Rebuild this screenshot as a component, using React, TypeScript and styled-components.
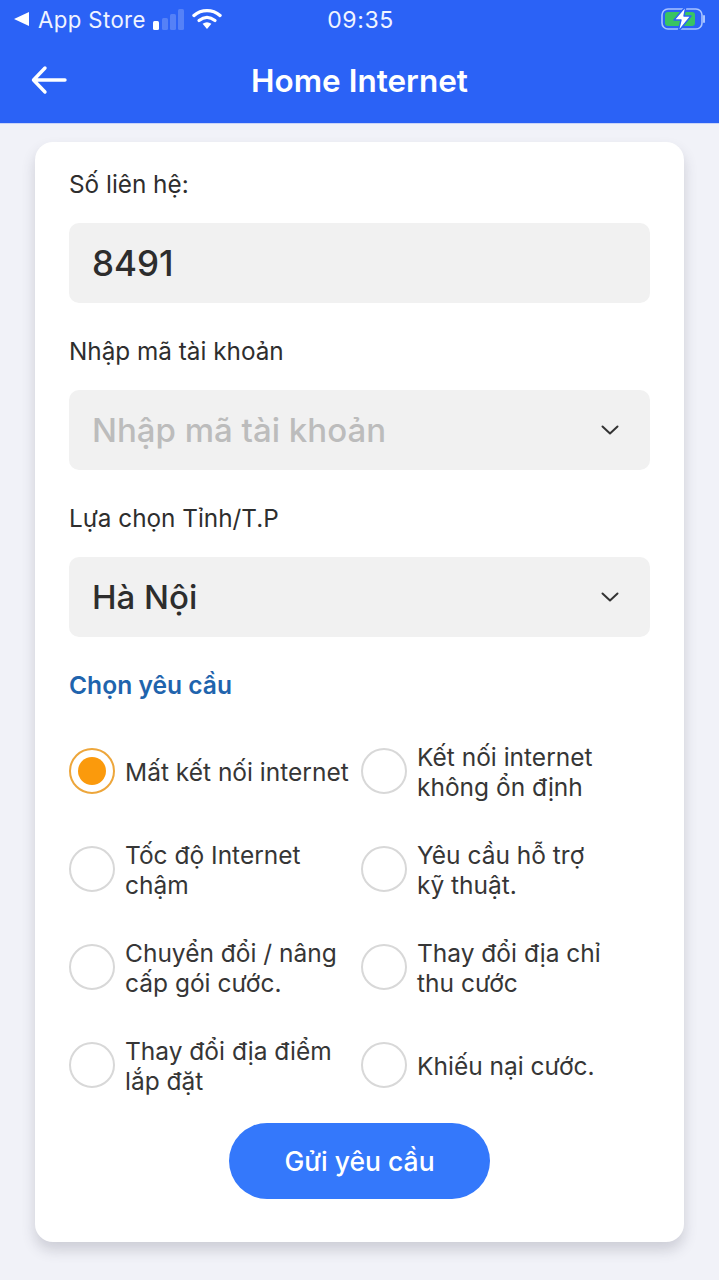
import React from "react";
import styled, { createGlobalStyle } from "styled-components";

const Global = createGlobalStyle`
  html, body { margin: 0; padding: 0; background: #f1f2f8; }
  body { font-family: Inter, "Noto Sans", sans-serif; }
`;

const Page = styled.div`
  width: 719px;
  height: 1280px;
  overflow: hidden;
  background: #f1f2f8;
  display: flex;
  flex-direction: column;
`;

const Header = styled.header`
  height: 124px;
  background: #2b62f6;
  color: #fff;
  display: flex;
  flex-direction: column;
  flex-shrink: 0;
  border-bottom: 1px solid #c9d4f8;
  box-sizing: border-box;
`;

const StatusBar = styled.div`
  height: 38px;
  padding: 0 12px 0 14px;
  display: grid;
  grid-template-columns: 1fr auto 1fr;
  align-items: center;
  font-size: 22.2px;
  color: #f0f4ff;
`;

const StatusLeft = styled.div`
  display: flex;
  align-items: center;
`;

const StatusRight = styled.div`
  display: flex;
  justify-content: flex-end;
`;

const StoreLabel = styled.span`
  margin-left: 9px;
  margin-right: 7px;
  letter-spacing: 0.4px;
`;

const Clock = styled.span`
  font-size: 23px;
  letter-spacing: 0.6px;
  padding-top: 2px;
`;

const NavBar = styled.div`
  position: relative;
  height: 85px;
  display: flex;
  align-items: center;
  justify-content: center;
`;

const BackIcon = styled.svg`
  position: absolute;
  left: 31px;
  top: 27px;
`;

const Title = styled.h1`
  margin: 1px 0 0;
  font-size: 31.5px;
  line-height: 36px;
  font-weight: 600;
`;

const Card = styled.main`
  margin: 18px 35px 0;
  height: 1100px;
  box-sizing: border-box;
  padding: 27px 34px 0;
  background: #fff;
  border-radius: 18px;
  box-shadow: 0 8px 14px rgba(60, 60, 80, 0.2);
  display: flex;
  flex-direction: column;
`;

const FieldLabel = styled.label`
  font-size: 24.3px;
  line-height: 30px;
  color: #2e2e2e;
  margin-bottom: 24px;
`;

const Field = styled.div`
  height: 80px;
  border-radius: 10px;
  background: #f1f1f1;
  display: flex;
  align-items: center;
  justify-content: space-between;
  padding: 0 31px 0 23px;
  margin-bottom: 33px;
  box-sizing: border-box;
`;

const FieldText = styled.span<{ $muted?: boolean; $large?: boolean }>`
  font-size: ${(p) => (p.$large ? "35px" : "33px")};
  font-weight: 450;
  color: ${(p) => (p.$muted ? "#bcbcbc" : "#2d2d2d")};
`;

const SectionTitle = styled.h2`
  margin: 0;
  font-size: 24.6px;
  line-height: 30px;
  font-weight: 600;
  color: #1f64ad;
`;

const Options = styled.div`
  margin-top: 41px;
  display: grid;
  grid-template-columns: 292px 1fr;
  grid-auto-rows: 98px;
`;

const Option = styled.div`
  display: flex;
  align-items: center;
  gap: 10px;
  height: 60px;
`;

const Radio = styled.span<{ $checked?: boolean }>`
  width: 46px;
  height: 46px;
  flex-shrink: 0;
  box-sizing: border-box;
  border-radius: 50%;
  border: ${(p) => (p.$checked ? "2.5px solid #eda63b" : "2px solid #d8d8d8")};
  display: flex;
  align-items: center;
  justify-content: center;
`;

const RadioDot = styled.span`
  width: 28px;
  height: 28px;
  border-radius: 50%;
  background: #fb9a0c;
`;

const OptionText = styled.span`
  font-size: 24.5px;
  line-height: 30px;
  padding-top: 2px;
  color: #363636;
  white-space: pre-line;
`;

const Submit = styled.button`
  align-self: center;
  width: 261px;
  height: 76px;
  margin-top: -10px;
  border: none;
  border-radius: 38px;
  background: #3478fb;
  color: #fff;
  font-family: Inter, "Noto Sans", sans-serif;
  font-size: 26.5px;
  font-weight: 500;
`;

const options = [
  { text: "Mất kết nối internet", checked: true },
  { text: "Kết nối internet\nkhông ổn định" },
  { text: "Tốc độ Internet\nchậm" },
  { text: "Yêu cầu hỗ trợ\nkỹ thuật." },
  { text: "Chuyển đổi / nâng\ncấp gói cước." },
  { text: "Thay đổi địa chỉ\nthu cước" },
  { text: "Thay đổi địa điểm\nlắp đặt" },
  { text: "Khiếu nại cước." },
];

const Chevron = () => (
  <svg width="18" height="12" viewBox="0 0 18 12" fill="none">
    <path d="M1.5 2.5 L9 9.5 L16.5 2.5" stroke="#333" strokeWidth="2" strokeLinecap="round" strokeLinejoin="round" />
  </svg>
);

export default function App() {
  return (
    <Page>
      <Global />
      <Header>
        <StatusBar>
          <StatusLeft>
            <svg width="15" height="14" viewBox="0 0 15 14">
              <path d="M15 0 V14 L0 7 Z" fill="#fff" />
            </svg>
            <StoreLabel>App Store</StoreLabel>
            <svg width="32" height="21" viewBox="0 0 32 21">
              <rect x="0" y="12" width="6" height="9" rx="1.5" fill="#fff" />
              <rect x="9" y="9" width="6" height="12" rx="1.5" fill="#fff" fillOpacity=".2" />
              <rect x="17" y="5" width="6" height="16" rx="1.5" fill="#fff" fillOpacity=".2" />
              <rect x="25" y="0" width="6" height="21" rx="1.5" fill="#fff" fillOpacity=".2" />
            </svg>
            <svg width="30" height="22" viewBox="0 0 30 22" style={{ marginLeft: 7 }} fill="none">
              <path d="M2 7.5 C9.5 1 20.5 1 28 7.5" stroke="#fff" strokeWidth="3.4" strokeLinecap="round" />
              <path d="M7 12.6 C12 8.6 18 8.6 23 12.6" stroke="#fff" strokeWidth="3.2" strokeLinecap="round" />
              <path d="M10.6 15.8 L15 21 L19.4 15.8 C16.6 13.8 13.4 13.8 10.6 15.8 Z" fill="#fff" />
            </svg>
          </StatusLeft>
          <Clock>09:35</Clock>
          <StatusRight>
            <svg width="46" height="26" viewBox="0 0 46 26" fill="none">
              <rect x="1" y="3" width="40" height="20" rx="6" stroke="#a9c4ff" strokeWidth="1.6" />
              <rect x="4" y="6" width="30" height="14" rx="3" fill="#39c462" />
              <path d="M43 10 V16" stroke="#a9c4ff" strokeWidth="2" strokeLinecap="round" />
              <path d="M25 0 L13 14 H20 L17 26 L30 10 H23 Z" fill="#fff" stroke="#2b62f6" strokeWidth="1.4" strokeLinejoin="round" />
            </svg>
          </StatusRight>
        </StatusBar>
        <NavBar>
          <BackIcon width="36" height="30" viewBox="0 0 36 30" fill="none">
            <path d="M34 15 H3 M14 3 L2.5 15 L14 27" stroke="#fff" strokeWidth="3.4" strokeLinecap="round" strokeLinejoin="round" />
          </BackIcon>
          <Title>Home Internet</Title>
        </NavBar>
      </Header>
      <Card>
        <FieldLabel>Số liên hệ:</FieldLabel>
        <Field>
          <FieldText $large>8491</FieldText>
        </Field>
        <FieldLabel>Nhập mã tài khoản</FieldLabel>
        <Field>
          <FieldText $muted>Nhập mã tài khoản</FieldText>
          <Chevron />
        </Field>
        <FieldLabel>Lựa chọn Tỉnh/T.P</FieldLabel>
        <Field>
          <FieldText>Hà Nội</FieldText>
          <Chevron />
        </Field>
        <SectionTitle>Chọn yêu cầu</SectionTitle>
        <Options>
          {options.map((o) => (
            <Option key={o.text}>
              <Radio $checked={o.checked}>{o.checked && <RadioDot />}</Radio>
              <OptionText>{o.text}</OptionText>
            </Option>
          ))}
        </Options>
        <Submit>Gửi yêu cầu</Submit>
      </Card>
    </Page>
  );
}
